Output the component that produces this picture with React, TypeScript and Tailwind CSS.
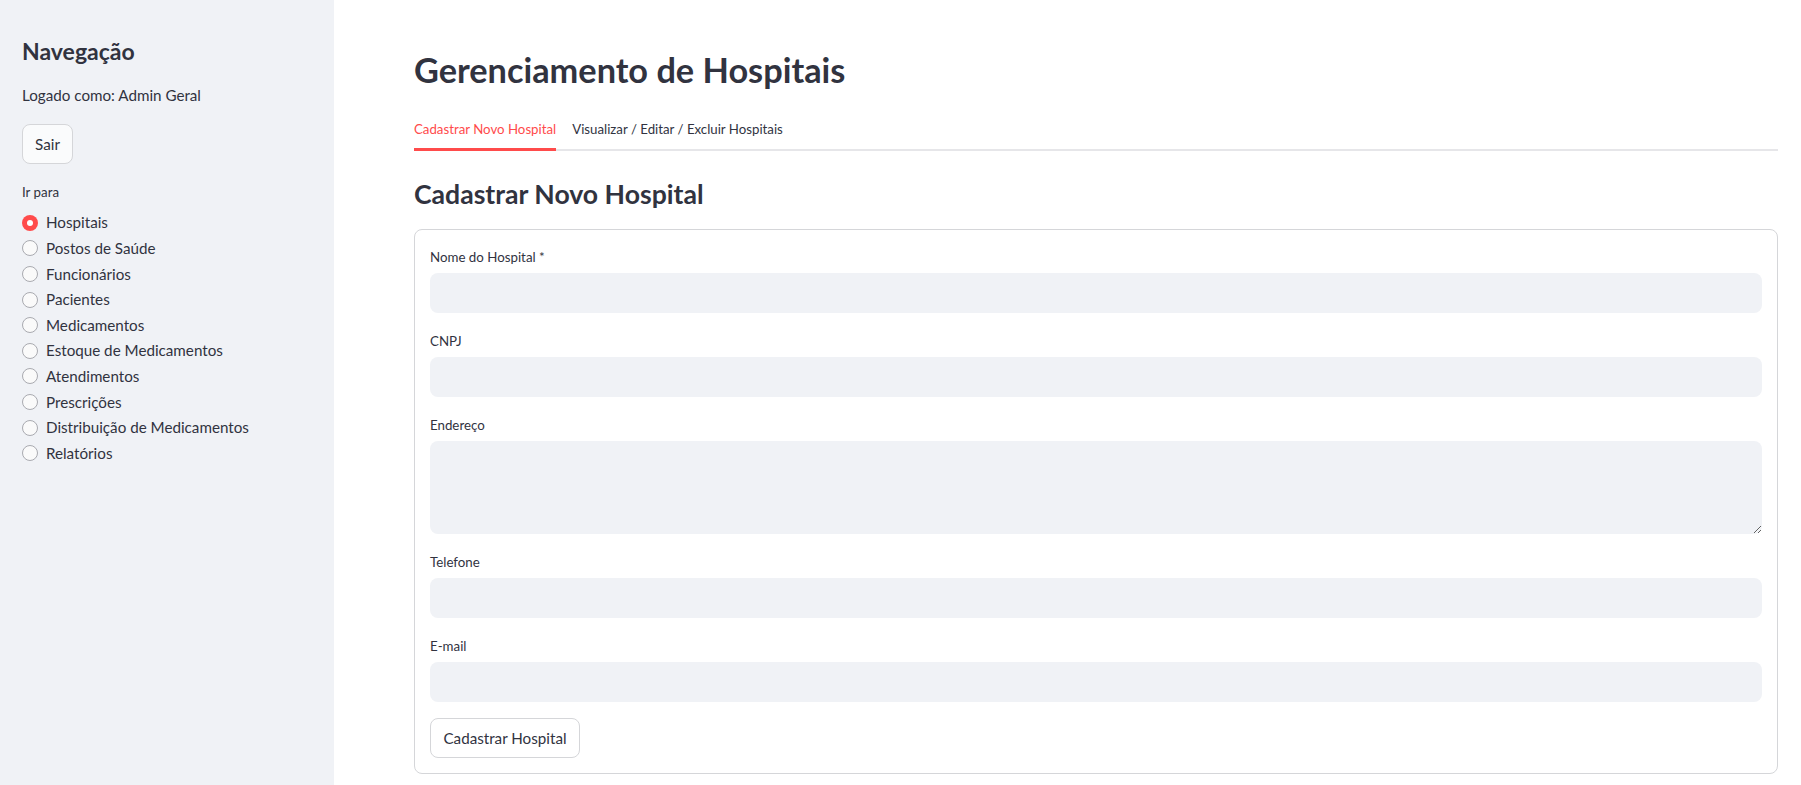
import React from "react";

const items = [
  "Hospitais",
  "Postos de Saúde",
  "Funcionários",
  "Pacientes",
  "Medicamentos",
  "Estoque de Medicamentos",
  "Atendimentos",
  "Prescrições",
  "Distribuição de Medicamentos",
  "Relatórios",
];

function Field({ label, tall }: { label: string; tall?: boolean }) {
  return (
    <div className="flex flex-col">
      <div className="h-[24px] pt-[2px] flex items-center text-[13.3px] text-[#31333f]">{label}</div>
      <div className="h-[4px]" />
      {tall ? (
        <textarea className="h-[93px] w-full rounded-[8px] bg-[#f0f2f6] resize-y outline-none" />
      ) : (
        <div className="h-[40px] w-full rounded-[8px] bg-[#f0f2f6]" />
      )}
    </div>
  );
}

export default function App() {
  return (
    <div
      className="flex w-full h-[785px] bg-white text-[#31333f] overflow-hidden"
      style={{ fontFamily: "Lato, 'Liberation Sans', sans-serif" }}
    >
      <aside className="w-[334px] shrink-0 h-full bg-[#f0f2f6] pl-[22px] pt-[35px] flex flex-col">
        <div className="h-[32px] flex items-center text-[23px] font-bold">Navegação</div>
        <div className="mt-[16px] h-[24px] flex items-center text-[15.2px]">Logado como: Admin Geral</div>
        <div className="mt-[17px]">
          <button className="h-[40px] w-[51px] rounded-[8px] border border-[#d5d6d9] bg-[#fafbfc] text-[15.2px] flex items-center justify-center">
            Sair
          </button>
        </div>
        <div className="mt-[17px] h-[24px] flex items-center text-[13.3px]">Ir para</div>
        <div className="mt-[5px] flex flex-col">
          {items.map((it, i) => (
            <div key={it} className="h-[25.6px] flex items-center gap-[8px] text-[15.2px]">
              {i === 0 ? (
                <span className="w-[16px] h-[16px] rounded-full bg-[#ff4b4b] flex items-center justify-center">
                  <span className="w-[6px] h-[6px] rounded-full bg-white" />
                </span>
              ) : (
                <span className="w-[16px] h-[16px] rounded-full border border-[#a9aab0] bg-[#fafafa]" />
              )}
              <span>{it}</span>
            </div>
          ))}
        </div>
      </aside>
      <main className="flex-1 pl-[80px] pr-[23px] pt-[45px] flex flex-col">
        <h1 className="h-[49px] flex items-center text-[34.3px] font-bold">Gerenciamento de Hospitais</h1>
        <div className="mt-[16px] relative flex gap-[16px] h-[41px]">
          <div className="absolute left-0 right-0 bottom-0 h-[2px] bg-[#e6e6e9]" />
          <div className="relative h-[41px] pt-[2px] flex items-center border-b-[3px] border-[#ff4b4b] text-[13.25px] text-[#ff4b4b]">
            Cadastrar Novo Hospital
          </div>
          <div className="relative h-[41px] pt-[2px] flex items-center border-b-[3px] border-transparent text-[13.25px]">
            Visualizar / Editar / Excluir Hospitais
          </div>
        </div>
        <h2 className="mt-[25px] h-[37px] flex items-center text-[26.6px] font-bold">Cadastrar Novo Hospital</h2>
        <div className="mt-[16px] border border-[#d5d6d9] rounded-[8px] p-[15px] flex flex-col gap-[16px]">
          <Field label="Nome do Hospital *" />
          <Field label="CNPJ" />
          <Field label="Endereço" tall />
          <Field label="Telefone" />
          <Field label="E-mail" />
          <div>
            <button className="h-[40px] w-[150px] rounded-[8px] border border-[#d5d6d9] bg-white text-[15.2px] flex items-center justify-center">
              Cadastrar Hospital
            </button>
          </div>
        </div>
      </main>
    </div>
  );
}
